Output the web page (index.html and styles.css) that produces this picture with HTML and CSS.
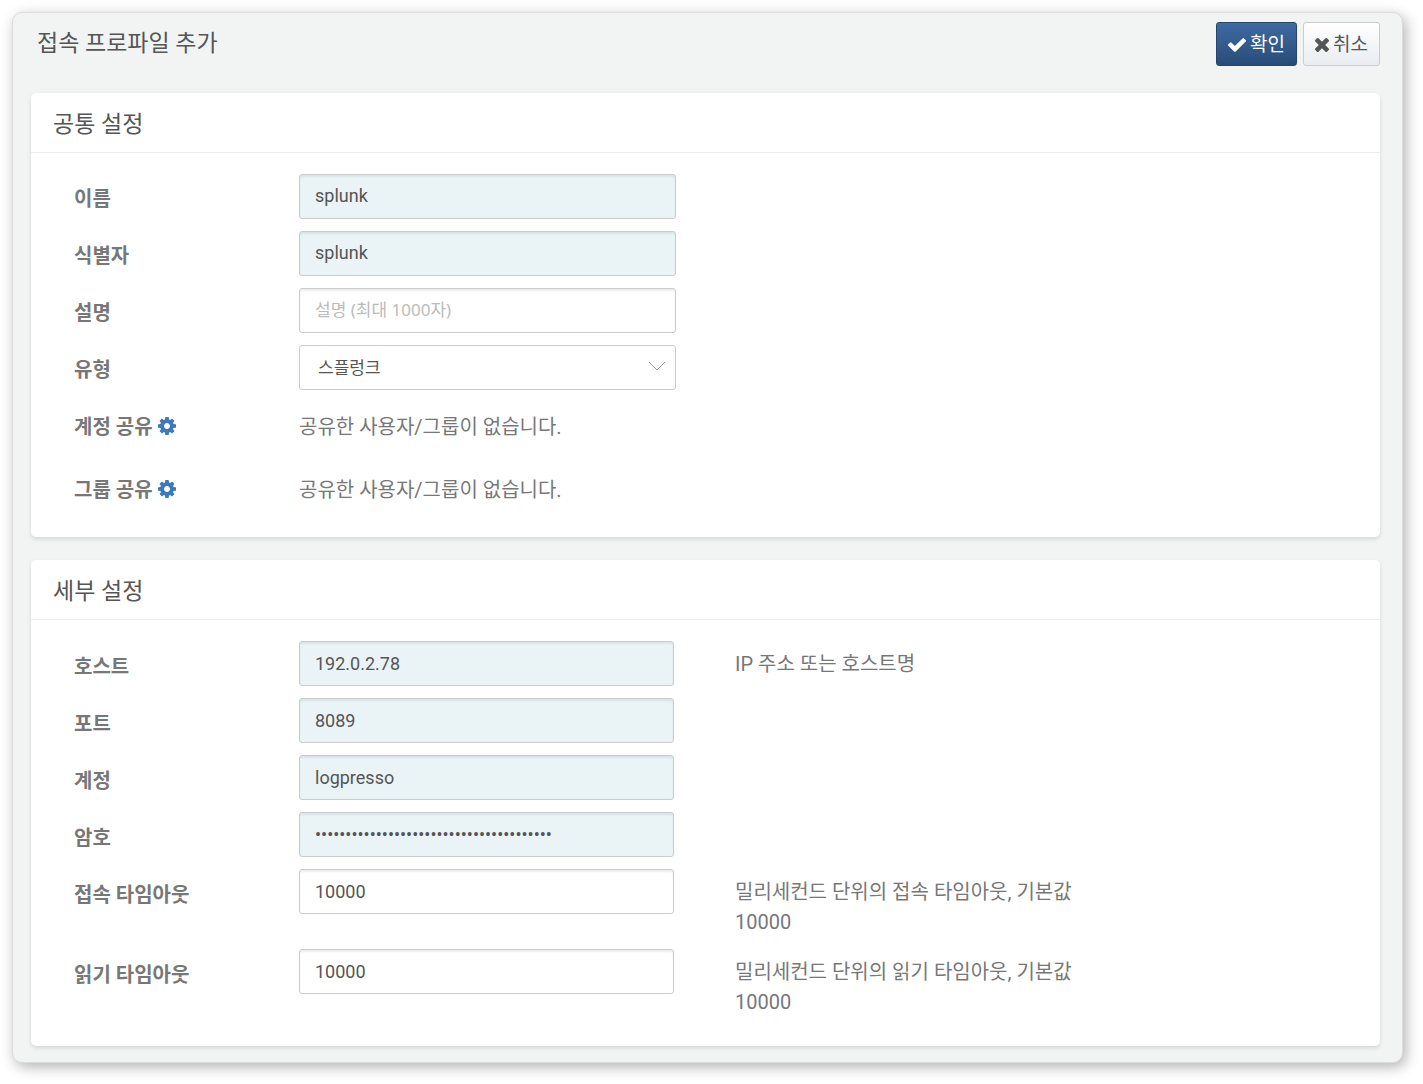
FILE: index.html
```html
<!DOCTYPE html>
<html lang="ko">
<head>
<meta charset="utf-8">
<meta name="viewport" content="width=device-width, initial-scale=1">
<title>접속 프로파일 추가</title>
<link rel="stylesheet" href="styles.css">
</head>
<body>
<svg class="sprite" aria-hidden="true">
  <symbol id="icon-cog" viewBox="128 128 1536 1536"><path d="M1152 896q0-106-75-181t-181-75-181 75-75 181 75 181 181 75 181-75 75-181zm512-109v222q0 12-8 23t-20 13l-185 28q-19 54-39 91 35 50 107 138 10 12 10 25t-9 23q-27 37-99 108t-94 71q-12 0-26-9l-138-108q-44 23-91 38-16 136-29 186-7 28-36 28h-222q-14 0-24.500-8.500t-11.500-21.500l-28-184q-49-16-90-37l-141 107q-10 9-25 9-14 0-25-11-126-114-165-168-7-10-7-23 0-12 8-23 15-21 51-66.500t54-70.500q-27-50-41-99l-183-27q-13-2-21-12.500t-8-23.500v-222q0-12 8-23t19-13l186-28q14-46 39-92-40-57-107-138-10-12-10-24 0-10 9-23 26-36 98.500-107.500t94.500-71.500q13 0 26 10l138 107q44-23 91-38 16-136 29-186 7-28 36-28h222q14 0 24.500 8.500t11.500 21.500l28 184q49 16 90 37l142-107q9-9 24-9 13 0 25 10 129 119 165 170 7 8 7 22 0 12-8 23-15 21-51 66.500t-54 70.500q26 50 41 98l183 28q13 2 21 12.500t8 23.500z"/></symbol>
</svg>
<form class="panel">
  <header class="panel-header">
    <h1 class="title">접속 프로파일 추가</h1>
    <div class="actions">
      <button type="submit" class="btn btn-primary">
        <svg class="btn-icon btn-icon-check" viewBox="121 334 1550 1188" aria-hidden="true"><path d="M1671 566q0 40-28 68l-724 724-136 136q-28 28-68 28t-68-28l-136-136-362-362q-28-28-28-68t28-68l136-136q28-28 68-28t68 28l294 295 656-657q28-28 68-28t68 28l136 136q28 28 28 68z"/></svg>확인</button>
      <button type="button" class="btn">
        <svg class="btn-icon" viewBox="302 366 1188 1188" aria-hidden="true"><path d="M1490 1322q0 40-28 68l-136 136q-28 28-68 28t-68-28l-294-294-294 294q-28 28-68 28t-68-28l-136-136q-28-28-28-68t28-68l294-294-294-294q-28-28-28-68t28-68l136-136q28-28 68-28t68 28l294 294 294-294q28-28 68-28t68 28l136 136q28 28 28 68t-28 68l-294 294 294 294q28 28 28 68z"/></svg>취소</button>
    </div>
  </header>

  <section class="card">
    <h2 class="card-title">공통 설정</h2>
    <div class="card-body common">
      <div class="row">
        <label class="label" for="name">이름</label>
        <input class="field filled" id="name" type="text" value="splunk">
      </div>
      <div class="row">
        <label class="label" for="identifier">식별자</label>
        <input class="field filled" id="identifier" type="text" value="splunk">
      </div>
      <div class="row">
        <label class="label" for="description">설명</label>
        <input class="field" id="description" type="text" placeholder="설명 (최대 1000자)">
      </div>
      <div class="row">
        <label class="label" for="type">유형</label>
        <select class="field select" id="type"><option>스플렁크</option></select>
      </div>
      <div class="row share">
        <div class="label">계정 공유 <button type="button" class="cog" aria-label="계정 공유 설정"><svg class="cog-icon"><use href="#icon-cog"/></svg></button></div>
        <div class="value">공유한 사용자/그룹이 없습니다.</div>
      </div>
      <div class="row share">
        <div class="label">그룹 공유 <button type="button" class="cog" aria-label="그룹 공유 설정"><svg class="cog-icon"><use href="#icon-cog"/></svg></button></div>
        <div class="value">공유한 사용자/그룹이 없습니다.</div>
      </div>
    </div>
  </section>

  <section class="card">
    <h2 class="card-title">세부 설정</h2>
    <div class="card-body detail">
      <div class="row">
        <label class="label" for="host">호스트</label>
        <input class="field filled" id="host" type="text" value="192.0.2.78">
        <p class="help">IP 주소 또는 호스트명</p>
      </div>
      <div class="row">
        <label class="label" for="port">포트</label>
        <input class="field filled" id="port" type="text" value="8089">
      </div>
      <div class="row">
        <label class="label" for="account">계정</label>
        <input class="field filled" id="account" type="text" value="logpresso">
      </div>
      <div class="row">
        <label class="label" for="password">암호</label>
        <input class="field filled" id="password" type="password" value="000000000000000000000000000000000000000">
      </div>
      <div class="row">
        <label class="label" for="connect-timeout">접속 타임아웃</label>
        <input class="field" id="connect-timeout" type="text" value="10000">
        <p class="help">밀리세컨드 단위의 접속 타임아웃, 기본값 10000</p>
      </div>
      <div class="row">
        <label class="label" for="read-timeout">읽기 타임아웃</label>
        <input class="field" id="read-timeout" type="text" value="10000">
        <p class="help">밀리세컨드 단위의 읽기 타임아웃, 기본값 10000</p>
      </div>
    </div>
  </section>
</form>
</body>
</html>
```
FILE: styles.css
```css
* {
  box-sizing: border-box;
}

body {
  margin: 0;
  padding: 12px 20px 20px 12px;
  background: #fff;
  color: #555;
  font-family: Roboto, "Noto Sans CJK KR", sans-serif;
  font-size: 20px;
  line-height: 30px;
}

.sprite {
  display: none;
}

.panel {
  padding: 9px 22px 16px 18px;
  border: 1px solid #dcdcdc;
  border-radius: 10px;
  background: #f2f4f4;
  box-shadow: 3px 4px 14px rgba(0, 0, 0, 0.3);
}

.panel-header {
  display: flex;
  align-items: flex-start;
  justify-content: space-between;
  margin-bottom: 27px;
  padding-left: 6px;
}

.title,
.card-title {
  margin: 0;
  font-size: 23px;
  font-weight: 400;
}

.title {
  padding-top: 7px;
}

.actions {
  display: flex;
  gap: 6px;
}

.btn {
  display: flex;
  align-items: center;
  gap: 4px;
  height: 44px;
  padding: 1px 11px 0;
  border: 1px solid #ccc;
  border-radius: 3px;
  background: linear-gradient(#fff, #e9edf1);
  color: #555;
  font: inherit;
  font-size: 19px;
}

.btn-primary {
  border-color: #25456b;
  background: linear-gradient(#3f6ba2, #284c78);
  color: #fff;
}

.btn-icon {
  width: 14px;
  height: 14px;
  fill: currentColor;
}

.btn-icon-check {
  width: 18px;
}

.card {
  border-radius: 5px;
  background: #fff;
  box-shadow: 0 2px 4px rgba(0, 0, 0, 0.12);
}

.card + .card {
  margin-top: 23px;
}

.card-title {
  padding: 17px 22px 12px;
  border-bottom: 1px solid #eee;
}

.card-body {
  display: flex;
  flex-direction: column;
  gap: 12px;
  padding: 21px 43px;
}

.detail {
  padding-bottom: 29px;
}

.row {
  display: grid;
  grid-template-columns: 225px minmax(0, 377px);
  align-items: start;
}

.detail .row {
  grid-template-columns: 225px minmax(0, 375px) minmax(0, 410px);
}

.label {
  padding-top: 10px;
  color: #777;
  font-weight: 700;
}

.detail .label {
  padding-top: 11px;
}

.share {
  min-height: 51px;
}

.value {
  padding-top: 10px;
  color: #777;
}

.help {
  margin: 0;
  padding: 8px 0 0 61px;
  color: #777;
}

.field {
  width: 100%;
  height: 45px;
  padding: 0 15px 2px;
  border: 1px solid #ccc;
  border-radius: 3px;
  background: #fff;
  box-shadow: inset 0 2px 2px rgba(0, 0, 0, 0.07);
  color: #555;
  font-family: inherit;
  font-size: 18px;
}

.detail .field {
  padding-bottom: 0;
}

.filled {
  background-color: #eaf4f7;
}

.field::placeholder {
  color: #bbb;
  font-family: "Noto Sans", "Noto Sans CJK KR", sans-serif;
  font-size: 17px;
}

.select {
  appearance: none;
  padding: 0 18px;
  background: #fff url("data:image/svg+xml,%3Csvg xmlns='http://www.w3.org/2000/svg' width='18' height='11'%3E%3Cpath d='M1 1l8 8 8-8' fill='none' stroke='%23999'/%3E%3C/svg%3E") no-repeat right 9px top 15px;
  box-shadow: none;
  font-size: 17px;
}

.cog {
  padding: 0;
  border: 0;
  background: none;
  color: #3c7ab8;
  line-height: 18px;
  vertical-align: -1px;
}

.cog-icon {
  display: block;
  width: 18px;
  height: 18px;
  fill: currentColor;
}
```
